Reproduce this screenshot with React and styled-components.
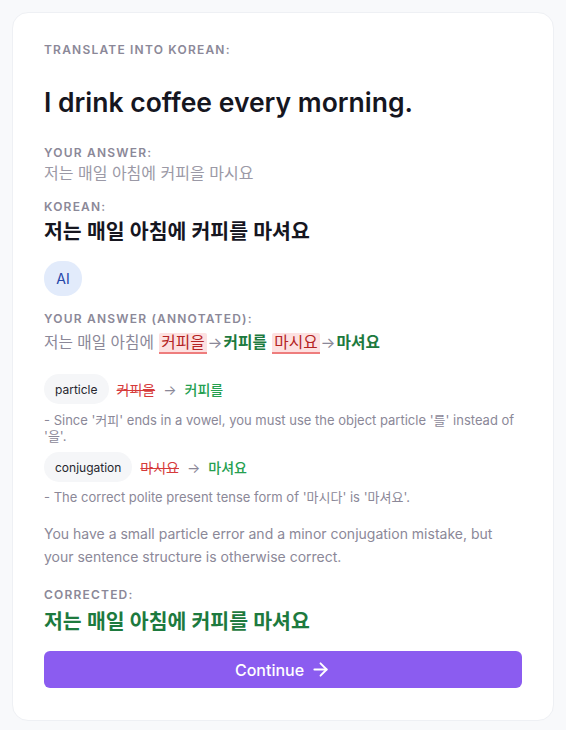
import React from "react";
import styled, { createGlobalStyle } from "styled-components";

const GlobalStyle = createGlobalStyle`
  * { box-sizing: border-box; }
  body {
    margin: 0;
    background: #f8f9fb;
    font-family: Inter, "Noto Sans CJK KR", sans-serif;
  }
`;

const Page = styled.div`
  padding: 12px 12px 10px;
`;

const Card = styled.div`
  background: #fff;
  border: 1px solid #eef0f4;
  border-radius: 16px;
  padding: 29px 31px 32px;
  display: flex;
  flex-direction: column;
`;

const Label = styled.div`
  font-size: 12px;
  line-height: 16px;
  font-weight: 600;
  letter-spacing: 1.2px;
  text-transform: uppercase;
  color: #8b8898;
  margin-top: ${(p) => p.$mt || 0}px;
`;

const Prompt = styled.h1`
  margin: 28px 0 0;
  font-size: 26.5px;
  line-height: 32px;
  font-weight: 600;
  color: #16161f;
`;

const KoreanText = styled.div`
  font-size: ${(p) => (p.$big ? 20.5 : 16)}px;
  line-height: ${(p) => (p.$big ? 28 : 22)}px;
  font-weight: ${(p) => (p.$big ? 600 : 400)};
  color: ${(p) => p.$color || "#16161f"};
  margin-top: ${(p) => p.$mt || 0}px;
`;

const AiBadge = styled.div`
  margin-top: 15px;
  width: 38px;
  height: 35px;
  border-radius: 17px;
  background: #e2ebfb;
  color: #2446a8;
  font-size: 14px;
  display: flex;
  align-items: center;
  justify-content: center;
`;

const Annotated = styled.div`
  margin-top: 4px;
  font-size: 15.7px;
  line-height: 24px;
  color: #8b8898;
`;

const Wrong = styled.span`
  background: #fde1e1;
  color: #b42323;
  border-bottom: 2px solid #ee7d7d;
  border-radius: 2px 2px 0 0;
  padding: 0 2px;
  margin-left: 1px;
`;

const Arrow = styled.span`
  color: #8b8898;
  margin: 0 ${(p) => p.$space ?? 1}px;
`;

const Right = styled.span`
  color: #1d7a3e;
  font-weight: 600;
`;

const FixRow = styled.div`
  display: flex;
  align-items: center;
  gap: 8px;
  margin-top: ${(p) => p.$mt}px;
  font-size: 14px;
`;

const Chip = styled.span`
  background: #f5f6f8;
  border-radius: 15px;
  height: 30px;
  padding: 0 11px;
  display: inline-flex;
  align-items: center;
  font-size: 12px;
  color: #26262e;
`;

const Struck = styled.span`
  color: #d63a3a;
  text-decoration: line-through;
`;

const Fixed = styled.span`
  color: #25a050;
  font-weight: 500;
`;

const Note = styled.div`
  margin-top: ${(p) => p.$mt}px;
  font-size: 13px;
  line-height: 16px;
  color: #8b8898;
`;

const Summary = styled.p`
  margin: 17px 0 0;
  font-size: 14px;
  line-height: 23px;
  color: #8b8898;
`;

const ContinueButton = styled.button`
  margin-top: 15px;
  height: 37px;
  border: 0;
  border-radius: 6px;
  background: #8b5cf0;
  color: #fff;
  font-family: Inter, sans-serif;
  font-size: 16px;
  font-weight: 500;
  display: flex;
  align-items: center;
  justify-content: center;
  gap: 6px;
  cursor: pointer;
  svg {
    width: 21px;
    height: 21px;
  }
`;

export default function App() {
  return (
    <Page>
      <GlobalStyle />
      <Card>
        <Label>Translate into Korean:</Label>
        <Prompt>I drink coffee every morning.</Prompt>

        <Label $mt={27}>Your answer:</Label>
        <KoreanText $mt={1} $color="#9b99a6">
          저는 매일 아침에 커피을 마시요
        </KoreanText>

        <Label $mt={15}>Korean:</Label>
        <KoreanText $big $mt={3}>
          저는 매일 아침에 커피를 마셔요
        </KoreanText>

        <AiBadge>AI</AiBadge>

        <Label $mt={15}>Your answer (annotated):</Label>
        <Annotated>
          저는 매일 아침에 <Wrong>커피을</Wrong>
          <Arrow>→</Arrow>
          <Right>커피를</Right> <Wrong>마시요</Wrong>
          <Arrow>→</Arrow>
          <Right>마셔요</Right>
        </Annotated>

        <FixRow $mt={19}>
          <Chip>particle</Chip>
          <Struck>커피을</Struck>
          <Arrow $space={0}>→</Arrow>
          <Fixed>커피를</Fixed>
        </FixRow>
        <Note $mt={8}>
          - Since '커피' ends in a vowel, you must use the object particle '를' instead of '을'.
        </Note>

        <FixRow $mt={8}>
          <Chip>conjugation</Chip>
          <Struck>마시요</Struck>
          <Arrow $space={0}>→</Arrow>
          <Fixed>마셔요</Fixed>
        </FixRow>
        <Note $mt={7}>- The correct polite present tense form of '마시다' is '마셔요'.</Note>

        <Summary>
          You have a small particle error and a minor conjugation mistake, but your sentence
          structure is otherwise correct.
        </Summary>

        <Label $mt={19}>Corrected:</Label>
        <KoreanText $big $mt={5} $color="#1d7a3e">
          저는 매일 아침에 커피를 마셔요
        </KoreanText>

        <ContinueButton>
          Continue
          <svg viewBox="0 0 24 24" fill="none" stroke="currentColor" strokeWidth="2.2" strokeLinecap="round" strokeLinejoin="round">
            <path d="M5 12h14" />
            <path d="m12 5 7 7-7 7" />
          </svg>
        </ContinueButton>
      </Card>
    </Page>
  );
}
